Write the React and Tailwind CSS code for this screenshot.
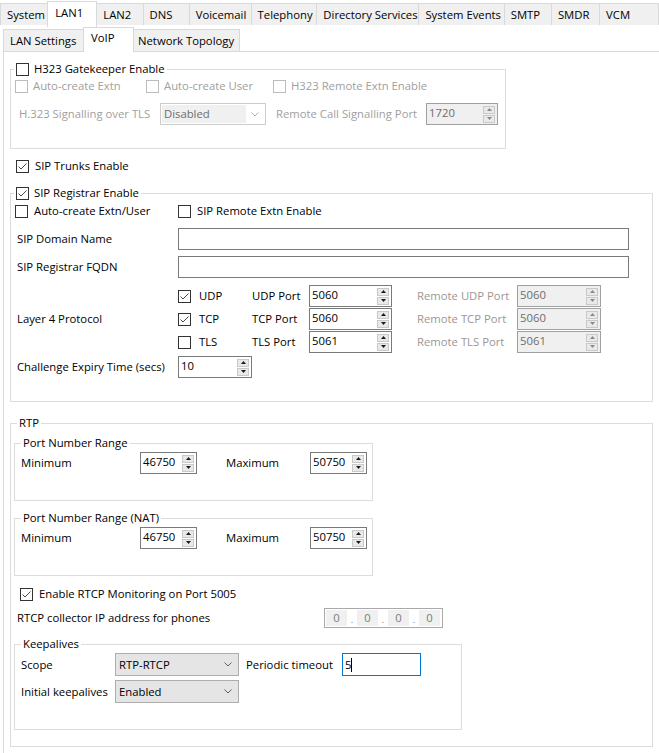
import React from "react";

function Check({ checked, disabled }) {
  return (
    <span
      className={`w-[13px] h-[13px] border bg-white flex items-center justify-center shrink-0 ${
        disabled ? "border-[#bcbcbc]" : "border-[#333333]"
      }`}
    >
      {checked && (
        <svg width="11" height="11" viewBox="0 0 11 11">
          <path d="M1.5 5.5 L4 8 L9.5 2.5" fill="none" stroke="#4a4a4a" strokeWidth="1" />
        </svg>
      )}
    </span>
  );
}

function CheckLabel({ checked, disabled, children, gap = "gap-[5px]", className = "" }) {
  return (
    <label className={`flex items-center h-[16px] ${gap} ${disabled ? "text-[#a0a0a0]" : ""} ${className}`}>
      <Check checked={checked} disabled={disabled} />
      <span className="whitespace-nowrap">{children}</span>
    </label>
  );
}

function Tri({ down, disabled }) {
  return (
    <svg width="5" height="3" viewBox="0 0 5 3">
      <polygon points={down ? "0,0 5,0 2.5,3" : "0,3 5,3 2.5,0"} fill={disabled ? "#8a8a8a" : "#1a1a1a"} />
    </svg>
  );
}

function SpinBtns({ disabled }) {
  return (
    <div className="flex flex-col gap-[1px] mr-[2px] justify-center">
      <div className="w-[12px] h-[8px] bg-[#e9e9e9] border border-[#c9c9c9] flex items-center justify-center">
        <Tri disabled={disabled} />
      </div>
      <div className="w-[12px] h-[8px] bg-[#e9e9e9] border border-[#c9c9c9] flex items-center justify-center">
        <Tri down disabled={disabled} />
      </div>
    </div>
  );
}

function Spin({ value, w, disabled }) {
  return (
    <div
      className={`${w} h-[22px] border flex items-stretch shrink-0 ${
        disabled ? "bg-[#f0f0f0] border-[#a0a0a0] text-[#6d6d6d]" : "bg-white border-[#7a7a7a]"
      }`}
    >
      <span className="flex-1 pl-[2px] leading-[18px]">{value}</span>
      <SpinBtns disabled={disabled} />
    </div>
  );
}

function Chevron({ color = "#606060" }) {
  return (
    <svg width="8" height="5" viewBox="0 0 8 5">
      <polyline points="0.5,0.5 4,4 7.5,0.5" fill="none" stroke={color} strokeWidth="1" />
    </svg>
  );
}

function Combo({ value, w }) {
  return (
    <div className={`${w} h-[23px] border border-[#adadad] bg-[#e5e5e5] flex items-center pl-[3px] pr-[6px] shrink-0`}>
      <span className="flex-1">{value}</span>
      <Chevron />
    </div>
  );
}

function Legend({ children, className = "ml-[6px] px-[2px]" }) {
  return (
    <legend className={`${className} h-[16px]`}>
      <span className="flex items-center h-[16px] gap-[5px] whitespace-nowrap">{children}</span>
    </legend>
  );
}

function TabI({ w, children, bl }) {
  return (
    <div
      className={`${w} h-[22px] mt-[3px] bg-[#f0f0f0] border-t border-r border-[#d9d9d9] ${
        bl ? "border-l" : ""
      } pl-[6px] flex items-center whitespace-nowrap`}
    >
      {children}
    </div>
  );
}

function RangeRow() {
  return (
    <div className="flex items-center mt-[1px]">
      <span className="w-[125px] pl-[6px]">Minimum</span>
      <Spin value="46750" w="w-[57px]" />
      <span className="w-[113px] pl-[29px]">Maximum</span>
      <Spin value="50750" w="w-[57px]" />
    </div>
  );
}

export default function App() {
  return (
    <div className="w-[659px] h-[753px] bg-white overflow-hidden text-black text-[11.3px] leading-[16px] font-['Open_Sans','Noto_Sans',sans-serif]">
      {/* Top tab row */}
      <div className="flex items-start h-[27px]">
        <div className="w-[48px] h-[22px] mt-[3px] bg-[#f0f0f0] border-t border-l border-[#d9d9d9] pl-[6px] flex items-center">
          System
        </div>
        <div className="w-[51px] h-[26px] mt-[1px] bg-white border border-b-0 border-[#d9d9d9] pl-[7px] pt-[3px]">
          LAN1
        </div>
        <TabI w="w-[47px]">LAN2</TabI>
        <TabI w="w-[47px]">DNS</TabI>
        <TabI w="w-[63px]">Voicemail</TabI>
        <TabI w="w-[67px]">Telephony</TabI>
        <TabI w="w-[104px]">Directory Services</TabI>
        <TabI w="w-[87px]">System Events</TabI>
        <TabI w="w-[48px]">SMTP</TabI>
        <TabI w="w-[49px]">SMDR</TabI>
        <TabI w="w-[60px]">VCM</TabI>
      </div>

      {/* Second tab row */}
      <div className="flex items-end h-[24px] ml-[3px]">
        <div className="w-[80px] h-[22px] bg-[#f0f0f0] border-t border-l border-[#d9d9d9] pl-[6px] flex items-center">
          LAN Settings
        </div>
        <div className="w-[51px] h-[25px] -mb-[1px] relative z-10 bg-white border border-b-0 border-[#d9d9d9] pl-[7px] pt-[2px]">
          VoIP
        </div>
        <div className="w-[106px] h-[22px] bg-[#f0f0f0] border-t border-r border-[#d9d9d9] pl-[4px] flex items-center">
          Network Topology
        </div>
      </div>

      {/* Content */}
      <div className="ml-[3px] w-[700px] h-[702px] border-t border-l border-[#d9d9d9] pl-[6px] pt-[9px]">
        {/* H323 */}
        <fieldset className="w-[496px] border border-[#dcdcdc] pb-[23px]">
          <Legend className="ml-[3px] px-[2px]">
            <Check />
            <span>H323 Gatekeeper Enable</span>
          </Legend>
          <div className="flex mt-[1px] pl-[4px]">
            <CheckLabel disabled className="w-[131px]">Auto-create Extn</CheckLabel>
            <CheckLabel disabled className="w-[127px]">Auto-create User</CheckLabel>
            <CheckLabel disabled>H323 Remote Extn Enable</CheckLabel>
          </div>
          <div className="flex items-center mt-[9px] text-[#a0a0a0]">
            <span className="w-[149px] pl-[8px] whitespace-nowrap">H.323 Signalling over TLS</span>
            <div className="w-[106px] h-[22px] border border-[#cccccc] bg-white flex items-center pl-[1px] pr-[6px]">
              <span className="w-[84px] h-[18px] bg-[#f0f0f0] text-[#6d6d6d] pl-[2px] leading-[17px]">Disabled</span>
              <span className="flex-1" />
              <Chevron color="#b0b0b0" />
            </div>
            <span className="w-[150px] ml-[10px] whitespace-nowrap">Remote Call Signalling Port</span>
            <Spin value="1720" w="w-[72px]" disabled />
          </div>
        </fieldset>

        <CheckLabel checked gap="gap-[6px]" className="mt-[9px] pl-[6px]">SIP Trunks Enable</CheckLabel>

        {/* SIP Registrar */}
        <fieldset className="w-[643px] border border-[#dcdcdc] mt-[11px] pb-[23px]">
          <Legend className="ml-[3px] px-[2px]">
            <Check checked />
            <span>SIP Registrar Enable</span>
          </Legend>
          <div className="flex mt-[2px] pl-[4px]">
            <CheckLabel gap="gap-[6px]" className="w-[163px]">Auto-create Extn/User</CheckLabel>
            <CheckLabel gap="gap-[6px]">SIP Remote Extn Enable</CheckLabel>
          </div>
          <div className="flex items-center mt-[9px]">
            <span className="w-[167px] pl-[6px]">SIP Domain Name</span>
            <div className="w-[451px] h-[22px] border border-[#7a7a7a] bg-white" />
          </div>
          <div className="flex items-center mt-[6px]">
            <span className="w-[167px] pl-[6px]">SIP Registrar FQDN</span>
            <div className="w-[451px] h-[22px] border border-[#7a7a7a] bg-white" />
          </div>
          <div className="flex mt-[7px]">
            <span className="w-[167px] pl-[6px] self-center">Layer 4 Protocol</span>
            <div className="flex flex-col gap-[1px]">
              {[
                ["UDP", true, "5060", "5060"],
                ["TCP", true, "5060", "5060"],
                ["TLS", false, "5061", "5061"],
              ].map(([p, c, v, rv]) => (
                <div key={p} className="flex items-center h-[22px]">
                  <CheckLabel checked={c} gap="gap-[8px]" className="w-[74px]">{p}</CheckLabel>
                  <span className="w-[57px] whitespace-nowrap">{p} Port</span>
                  <Spin value={v} w="w-[83px]" />
                  <span className="w-[100px] ml-[25px] text-[#9d9595] whitespace-nowrap">Remote {p} Port</span>
                  <Spin value={rv} w="w-[84px]" disabled />
                </div>
              ))}
            </div>
          </div>
          <div className="flex items-center mt-[3px]">
            <span className="w-[167px] pl-[6px] whitespace-nowrap">Challenge Expiry Time (secs)</span>
            <Spin value="10" w="w-[74px]" />
          </div>
        </fieldset>

        {/* RTP */}
        <fieldset className="w-[643px] border border-[#dcdcdc] mt-[13px] pb-[16px]">
          <Legend>RTP</Legend>
          <fieldset className="w-[359px] ml-[3px] mt-[4px] border border-[#dcdcdc] pb-[26px]">
            <Legend>Port Number Range</Legend>
            <RangeRow />
          </fieldset>
          <fieldset className="w-[359px] ml-[3px] mt-[9px] border border-[#dcdcdc] pb-[26px]">
            <Legend>Port Number Range (NAT)</Legend>
            <RangeRow />
          </fieldset>
          <CheckLabel checked gap="gap-[6px]" className="mt-[10px] pl-[9px]">
            Enable RTCP Monitoring on Port 5005
          </CheckLabel>
          <div className="flex items-center mt-[6px]">
            <span className="w-[313px] pl-[6px]">RTCP collector IP address for phones</span>
            <div className="w-[119px] h-[20px] border border-[#a9a9a9] bg-white flex items-center pl-[1px] text-[#7a7a7a]">
              {[0, 1, 2, 3].map((i) => (
                <React.Fragment key={i}>
                  {i > 0 && <span className="w-[10px] text-center text-[9px] leading-[10px] mt-[4px]">.</span>}
                  <span className="w-[21px] h-[16px] bg-[#f0f0f0] text-center leading-[16px]">0</span>
                </React.Fragment>
              ))}
            </div>
          </div>
          <fieldset className="w-[448px] ml-[3px] mt-[8px] border border-[#dcdcdc] pb-[26px]">
            <Legend>Keepalives</Legend>
            <div className="flex items-center mt-[1px]">
              <span className="w-[100px] pl-[6px]">Scope</span>
              <Combo value="RTP-RTCP" w="w-[124px]" />
              <span className="w-[103px] pl-[7px] whitespace-nowrap">Periodic timeout</span>
              <div className="w-[79px] h-[23px] border border-[#0078d7] bg-white flex items-center pl-[2px]">
                <span>5</span>
                <span className="w-[1px] h-[14px] bg-black" />
              </div>
            </div>
            <div className="flex items-center mt-[4px]">
              <span className="w-[100px] pl-[6px] whitespace-nowrap">Initial keepalives</span>
              <Combo value="Enabled" w="w-[124px]" />
            </div>
          </fieldset>
        </fieldset>
      </div>
    </div>
  );
}
